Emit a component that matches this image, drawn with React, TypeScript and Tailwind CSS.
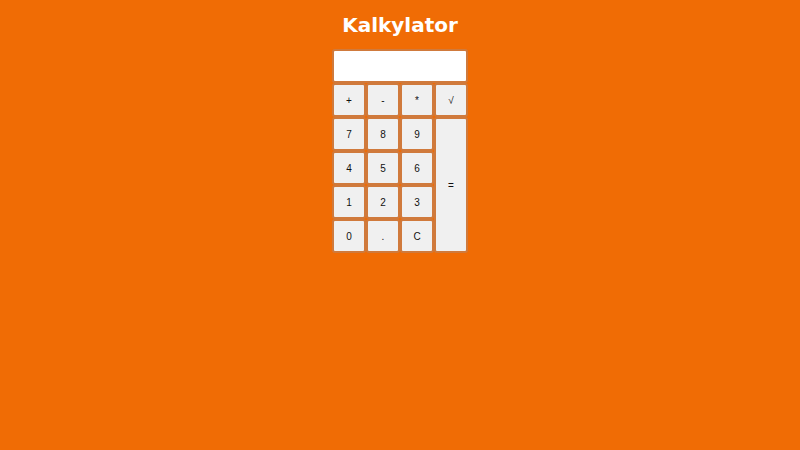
import React from "react";

const Btn = ({ label, className = "" }: { label: string; className?: string }) => (
  <div
    className={`flex items-center justify-center bg-[#f0f0f0] border-2 border-[#d07a3c] rounded-[3px] text-[10px] text-[#111111] ${className}`}
    style={{ fontFamily: '"Liberation Sans", Arial, sans-serif' }}
  >
    {label}
  </div>
);

export default function App() {
  return (
    <div className="w-[800px] h-[450px] bg-[#f06c05] flex flex-col items-center">
      <h1
        className="mt-[13px] text-[20px] leading-[24px] font-bold text-white"
        style={{ fontFamily: '"DejaVu Sans", sans-serif' }}
      >
        Kalkylator
      </h1>
      <div className="mt-[12px] grid grid-cols-[34px_34px_34px_34px] grid-rows-[34px_34px_34px_34px_34px_34px]">
        <div className="col-span-4 bg-white border-2 border-[#d07a3c] rounded-[3px]" />
        <Btn label="+" />
        <Btn label="-" />
        <Btn label="*" />
        <Btn label="√" />
        <Btn label="7" />
        <Btn label="8" />
        <Btn label="9" />
        <Btn label="=" className="row-span-4" />
        <Btn label="4" />
        <Btn label="5" />
        <Btn label="6" />
        <Btn label="1" />
        <Btn label="2" />
        <Btn label="3" />
        <Btn label="0" />
        <Btn label="." />
        <Btn label="C" />
      </div>
    </div>
  );
}
